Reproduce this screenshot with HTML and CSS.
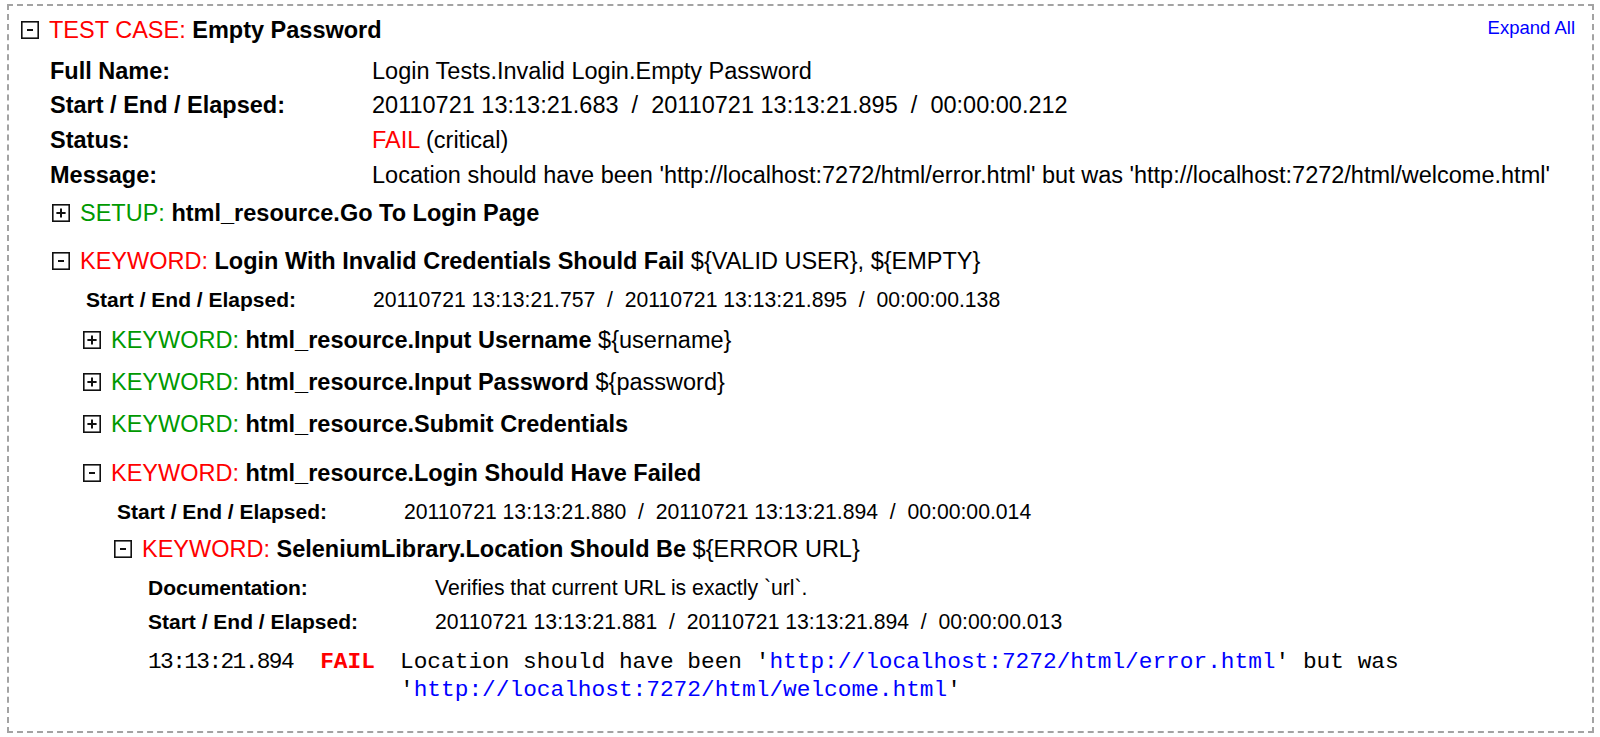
FILE: index.html
```html
<!DOCTYPE html>
<html lang="en">
<head>
<meta charset="utf-8">
<title>Test Log</title>
<link rel="stylesheet" href="styles.css">
</head>
<body>
<div class="log">
  <div class="element test">
    <div class="el-header">
      <svg class="toggle" viewBox="0 0 18 18"><rect x="0.8" y="0.8" width="16.4" height="16.4" fill="#fff" stroke="#111" stroke-width="1.6"/><path d="M6 9h6" stroke="#111" stroke-width="2"/></svg>
      <span class="el-title"><span class="fail">TEST CASE:</span> <b>Empty Password</b></span>
      <a class="expand-all" href="#">Expand All</a>
    </div>
    <div class="el-body">
      <div class="meta meta-lg">
        <div class="m-label">Full Name:</div><div class="m-value">Login Tests.Invalid Login.Empty Password</div>
        <div class="m-label">Start / End / Elapsed:</div><div class="m-value">20110721 13:13:21.683&nbsp; / &nbsp;20110721 13:13:21.895&nbsp; / &nbsp;00:00:00.212</div>
        <div class="m-label">Status:</div><div class="m-value"><span class="fail">FAIL</span> (critical)</div>
        <div class="m-label">Message:</div><div class="m-value">Location should have been 'http://localhost:7272/html/error.html' but was 'http://localhost:7272/html/welcome.html'</div>
      </div>

      <div class="element kw kw-first">
        <div class="el-header">
          <svg class="toggle" viewBox="0 0 18 18"><rect x="0.8" y="0.8" width="16.4" height="16.4" fill="#fff" stroke="#111" stroke-width="1.6"/><path d="M4.4 9h9.2M9 4.4v9.2" stroke="#111" stroke-width="2"/></svg>
          <span class="el-title"><span class="pass">SETUP:</span> <b>html_resource.Go To Login Page</b></span>
        </div>
      </div>

      <div class="element kw kw-after-setup">
        <div class="el-header">
          <svg class="toggle" viewBox="0 0 18 18"><rect x="0.8" y="0.8" width="16.4" height="16.4" fill="#fff" stroke="#111" stroke-width="1.6"/><path d="M6 9h6" stroke="#111" stroke-width="2"/></svg>
          <span class="el-title"><span class="fail">KEYWORD:</span> <b>Login With Invalid Credentials Should Fail</b> ${VALID USER}, ${EMPTY}</span>
        </div>
        <div class="el-body">
          <div class="meta meta-sm">
            <div class="m-label">Start / End / Elapsed:</div><div class="m-value">20110721 13:13:21.757&nbsp; / &nbsp;20110721 13:13:21.895&nbsp; / &nbsp;00:00:00.138</div>
          </div>

          <div class="element kw kw-first-child">
            <div class="el-header">
              <svg class="toggle" viewBox="0 0 18 18"><rect x="0.8" y="0.8" width="16.4" height="16.4" fill="#fff" stroke="#111" stroke-width="1.6"/><path d="M4.4 9h9.2M9 4.4v9.2" stroke="#111" stroke-width="2"/></svg>
              <span class="el-title"><span class="pass">KEYWORD:</span> <b>html_resource.Input Username</b> ${username}</span>
            </div>
          </div>

          <div class="element kw">
            <div class="el-header">
              <svg class="toggle" viewBox="0 0 18 18"><rect x="0.8" y="0.8" width="16.4" height="16.4" fill="#fff" stroke="#111" stroke-width="1.6"/><path d="M4.4 9h9.2M9 4.4v9.2" stroke="#111" stroke-width="2"/></svg>
              <span class="el-title"><span class="pass">KEYWORD:</span> <b>html_resource.Input Password</b> ${password}</span>
            </div>
          </div>

          <div class="element kw">
            <div class="el-header">
              <svg class="toggle" viewBox="0 0 18 18"><rect x="0.8" y="0.8" width="16.4" height="16.4" fill="#fff" stroke="#111" stroke-width="1.6"/><path d="M4.4 9h9.2M9 4.4v9.2" stroke="#111" stroke-width="2"/></svg>
              <span class="el-title"><span class="pass">KEYWORD:</span> <b>html_resource.Submit Credentials</b></span>
            </div>
          </div>

          <div class="element kw kw-open">
            <div class="el-header">
              <svg class="toggle" viewBox="0 0 18 18"><rect x="0.8" y="0.8" width="16.4" height="16.4" fill="#fff" stroke="#111" stroke-width="1.6"/><path d="M6 9h6" stroke="#111" stroke-width="2"/></svg>
              <span class="el-title"><span class="fail">KEYWORD:</span> <b>html_resource.Login Should Have Failed</b></span>
            </div>
            <div class="el-body">
              <div class="meta meta-sm">
                <div class="m-label">Start / End / Elapsed:</div><div class="m-value">20110721 13:13:21.880&nbsp; / &nbsp;20110721 13:13:21.894&nbsp; / &nbsp;00:00:00.014</div>
              </div>

              <div class="element kw kw-after-meta">
                <div class="el-header">
                  <svg class="toggle" viewBox="0 0 18 18"><rect x="0.8" y="0.8" width="16.4" height="16.4" fill="#fff" stroke="#111" stroke-width="1.6"/><path d="M6 9h6" stroke="#111" stroke-width="2"/></svg>
                  <span class="el-title"><span class="fail">KEYWORD:</span> <b>SeleniumLibrary.Location Should Be</b> ${ERROR URL}</span>
                </div>
                <div class="el-body">
                  <div class="meta meta-sm">
                    <div class="m-label">Documentation:</div><div class="m-value">Verifies that current URL is exactly `url`.</div>
                    <div class="m-label">Start / End / Elapsed:</div><div class="m-value">20110721 13:13:21.881&nbsp; / &nbsp;20110721 13:13:21.894&nbsp; / &nbsp;00:00:00.013</div>
                  </div>
                  <div class="messages">
                    <div class="msg-time">13:13:21.894</div>
                    <div class="msg-level fail">FAIL</div>
                    <div class="msg-text">Location should have been '<a href="#">http://localhost:7272/html/error.html</a>' but was '<a href="#">http://localhost:7272/html/welcome.html</a>'</div>
                  </div>
                </div>
              </div>
            </div>
          </div>
        </div>
      </div>
    </div>
  </div>
</div>
</body>
</html>
```

FILE: styles.css
```css
* { box-sizing: border-box; }

html, body {
  margin: 0;
  background: #fff;
}

body {
  padding: 4px 6px 0 7px;
  font-family: "Liberation Sans", Arial, Helvetica, sans-serif;
  color: #000;
}

.log {
  border: 2px dashed #a3a3a3;
  padding: 9.2px 17px 26.8px 12px;
}

.fail { color: #ff0000; }
.pass { color: #009900; }

.el-header {
  display: flex;
  align-items: center;
  height: 30px;
  white-space: nowrap;
  font-size: 23.5px;
  line-height: 30px;
}

.toggle {
  flex: none;
  width: 18px;
  height: 18px;
  margin-right: 10px;
}

.el-title b { font-weight: bold; }

.expand-all {
  margin-left: auto;
  align-self: flex-start;
  font-size: 18.5px;
  line-height: 26px;
  color: #0000ff;
  text-decoration: none;
}

.el-body {
  padding-left: 31px;
}

.meta {
  display: grid;
  white-space: nowrap;
}

.m-label { font-weight: bold; }

.meta-lg {
  grid-template-columns: 322px auto;
  font-size: 23.5px;
  line-height: 34.7px;
  margin: 8.5px 0 0 -2px;
}

.meta-sm {
  grid-template-columns: 287px auto;
  font-size: 21px;
  line-height: 33.6px;
  margin: 7px 0 0 3px;
}

.meta-sm .m-value { font-size: 21.2px; }

.kw { margin-top: 12px; }
.kw-first { margin-top: 5.8px; }
.kw-after-setup { margin-top: 17.5px; }
.kw-first-child { margin-top: 9px; }
.kw-open { margin-top: 18.5px; }
.kw-after-meta { margin-top: 6px; }

.messages {
  display: grid;
  grid-template-columns: 150px 105px 1fr;
  margin-top: 9.5px;
  font-family: "Liberation Mono", "Courier New", monospace;
  font-size: 22.8px;
  line-height: 28px;
}

.msg-time {
  padding-left: 3px;
  letter-spacing: -0.07em;
  white-space: nowrap;
}

.msg-level {
  text-align: center;
  font-weight: bold;
}

.msg-text a {
  color: #0000ff;
  text-decoration: none;
}
```
